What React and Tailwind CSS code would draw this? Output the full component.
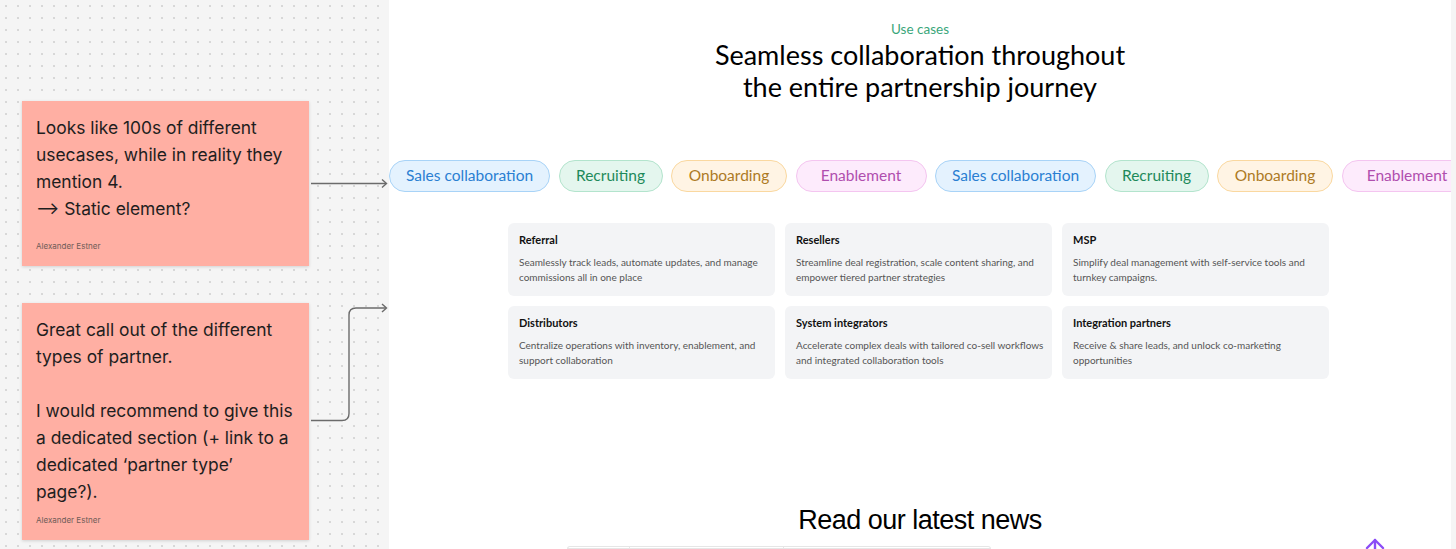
import React from "react";

const pills = [
  { label: "Sales collaboration", w: "w-[161px]", cls: "bg-[#e4f2fe] border-[#a8d3f7] text-[#2a7fd2]" },
  { label: "Recruiting", w: "w-[104px]", cls: "bg-[#e4f6ee] border-[#b3e4cd] text-[#1e8a5b]" },
  { label: "Onboarding", w: "w-[116px]", cls: "bg-[#fff4e4] border-[#fad8a0] text-[#ad7a24]" },
  { label: "Enablement", w: "w-[131px]", cls: "bg-[#fdebfc] border-[#f4c5f0] text-[#b04fae]" },
];

const cards = [
  { title: "Referral", text: "Seamlessly track leads, automate updates, and manage commissions all in one place" },
  { title: "Resellers", text: "Streamline deal registration, scale content sharing, and empower tiered partner strategies" },
  { title: "MSP", text: "Simplify deal management with self-service tools and turnkey campaigns." },
  { title: "Distributors", text: "Centralize operations with inventory, enablement, and support collaboration" },
  { title: "System integrators", text: "Accelerate complex deals with tailored co-sell workflows and integrated collaboration tools" },
  { title: "Integration partners", text: "Receive & share leads, and unlock co-marketing opportunities" },
];

function Sticky({ children, height }) {
  return (
    <div
      className="w-[287px] bg-[#ffafa3] shadow-[0_1px_3px_rgba(0,0,0,0.15)] flex flex-col pt-[13px] pb-[15px] px-[14px] font-['Inter',sans-serif]"
      style={{ height }}
    >
      <div className="text-[17.4px] leading-[27px] text-[#1e1e1e]">{children}</div>
      <div className="mt-auto text-[8px] leading-[10px] text-[#6f5c58]">Alexander Estner</div>
    </div>
  );
}

export default function App() {
  return (
    <div className="w-[1456px] h-[549px] overflow-hidden flex bg-[#f5f5f5] bg-[radial-gradient(#d6d6d6_0.7px,transparent_0.8px)] bg-[size:12px_12px]">
      {/* canvas with comments */}
      <div className="relative w-[389px] shrink-0 pt-[101px] pl-[22px] flex flex-col gap-[37px]">
        <Sticky height={165}>
          Looks like 100s of different usecases, while in reality they mention 4.
          <br />⟶ Static element?
        </Sticky>
        <Sticky height={237}>
          Great call out of the different types of partner.
          <br />
          <br />
          I would recommend to give this a dedicated section (+ link to a dedicated ‘partner type’ page?).
        </Sticky>
        <svg className="absolute left-0 top-0" width="389" height="549" fill="none" stroke="#6b6b6b" strokeWidth="1.4">
          <path d="M311 183.5 H386" />
          <path d="M382 179.5 L386.5 183.5 L382 187.5" />
          <path d="M311 420.5 H342 Q349 420.5 349 413.5 V315 Q349 308 356 308 H386" />
          <path d="M382 304 L386.5 308 L382 312" />
        </svg>
      </div>

      {/* website frame */}
      <div className="relative w-[1062px] shrink-0 bg-white overflow-hidden flex flex-col items-center pt-[21px] font-['Lato',sans-serif]">
        <div className="text-[13.5px] leading-[16px] text-[#3aa67a]">Use cases</div>
        <h2 className="mt-[2px] text-[27px] leading-[32px] text-black text-center">
          Seamless collaboration throughout
          <br />
          the entire partnership journey
        </h2>

        <div className="mt-[57px] self-start flex gap-[8.5px]">
          {[...pills, ...pills].map((p, i) => (
            <div
              key={i}
              className={`shrink-0 h-[32px] rounded-full border flex items-center justify-center text-[15.5px] ${p.w} ${p.cls}`}
            >
              {p.label}
            </div>
          ))}
        </div>

        <div className="mt-[31px] ml-[-3px] grid grid-cols-[267px_267px_267px] gap-[10px]">
          {cards.map((c) => (
            <div key={c.title} className="h-[73px] rounded-[6px] bg-[#f3f4f6] pl-[11px] pr-[6px] pt-[10px]">
              <div className="text-[11px] leading-[14px] font-bold text-[#111]">{c.title}</div>
              <div className="mt-[8px] text-[10px] leading-[15px] text-[#555]">{c.text}</div>
            </div>
          ))}
        </div>

        <h3 className="mt-[125px] text-[27px] leading-[32px] text-black font-['Liberation_Sans',sans-serif] tracking-[-0.5px]">
          Read our latest news
        </h3>
        <div className="mt-[10px] self-start ml-[178px] w-[424px] h-[20px] rounded-t-[8px] border border-[#e6e6e6] flex">
          <div className="w-[62px] border-r border-[#e6e6e6]" />
          <div className="w-[154px] border-r border-[#e6e6e6]" />
        </div>

        <svg className="absolute left-[974px] top-[537px]" width="24" height="24" viewBox="0 0 24 24" fill="none" stroke="#8b4cf6" strokeWidth="2.4" strokeLinecap="round" strokeLinejoin="round">
          <path d="M12 3 V22" />
          <path d="M4 11 L12 3 L20 11" />
        </svg>
      </div>
    </div>
  );
}
